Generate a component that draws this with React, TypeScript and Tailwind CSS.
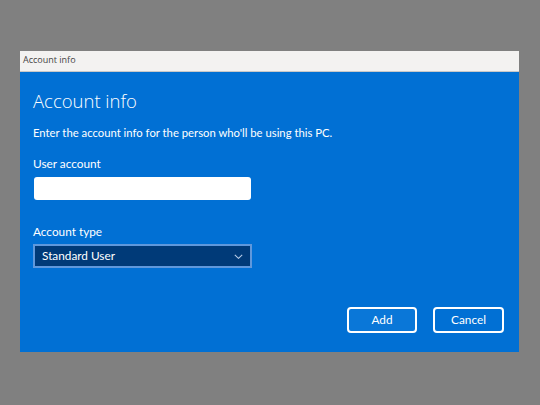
import React from "react";

export default function App() {
  return (
    <div className="w-[540px] h-[405px] bg-[#808080] pt-[51px] pl-[20px]" style={{ fontFamily: 'Lato, "Noto Sans", sans-serif' }}>
      <div className="w-[499px] h-[301px] flex flex-col">
        <div className="h-[21px] bg-[#f3f2f1] border-b border-[#c8c8c8] text-[9px] text-[#444] pl-[3px] leading-[18px] font-['Open_Sans']">
          Account info
        </div>
        <div className="flex-1 bg-[#0170d4] text-white pl-[13px] pr-[15px] flex flex-col">
          <div className="text-[18.5px] font-light mt-[17px] leading-[24px] font-['Open_Sans']">Account info</div>
          <div className="text-[11.3px] mt-[12px] leading-[16px]">Enter the account info for the person who'll be using this PC.</div>
          <div className="text-[11.8px] mt-[15px] leading-[16px]">User account</div>
          <div className="mt-[5px] ml-[1px] w-[217px] h-[23px] bg-white rounded-[3px]" />
          <div className="text-[11.8px] mt-[24px] leading-[16px]">Account type</div>
          <div className="mt-[4px] w-[219px] h-[24px] bg-[#003a78] border-2 border-[#5f98dc] flex items-center justify-between pl-[7px] pr-[7px]">
            <span className="text-[11.8px]">Standard User</span>
            <svg width="9" height="5" viewBox="0 0 9 5" fill="none" stroke="#b8cde8" strokeWidth="1.1"><path d="M0.8 0.8l3.7 3.5 3.7-3.5" /></svg>
          </div>
          <div className="flex justify-end gap-[16px] mt-[39px]">
            <button className="w-[70px] h-[26px] rounded-[4px] border-2 border-white bg-[#0a77d8] text-[11.8px]">Add</button>
            <button className="w-[71px] h-[26px] rounded-[4px] border-2 border-white bg-[#0170d4] text-[11.8px]">Cancel</button>
          </div>
        </div>
      </div>
    </div>
  );
}
